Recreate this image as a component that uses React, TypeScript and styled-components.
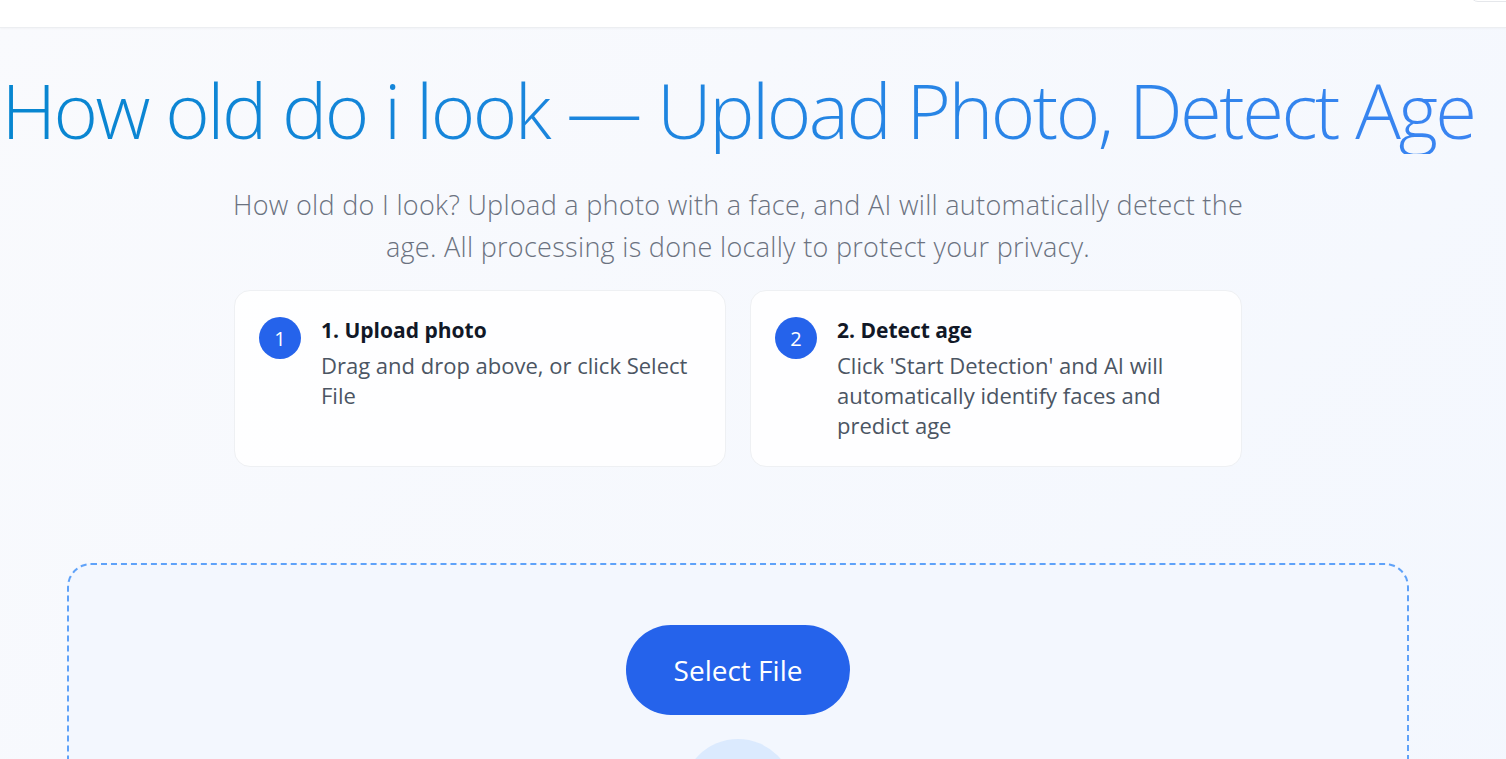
import React from "react";
import styled, { createGlobalStyle } from "styled-components";

const GlobalStyle = createGlobalStyle`
  html, body {
    margin: 0;
    padding: 0;
  }
  body {
    font-family: "Open Sans", "Noto Sans", sans-serif;
    background: #f8fafc;
    -webkit-font-smoothing: antialiased;
  }
`;

const Page = styled.div`
  min-height: 759px;
  background: linear-gradient(135deg, #f9fafd 0%, #f3f7fe 100%);
  overflow: hidden;
`;

const TopBar = styled.header`
  height: 27px;
  background: #fff;
  border-bottom: 1px solid #eceef1;
  box-shadow: 0 1px 2px rgba(15, 23, 42, 0.03);
  display: flex;
  justify-content: flex-end;
  align-items: flex-end;
  overflow: hidden;
`;

const TopButton = styled.div`
  width: 42px;
  height: 36px;
  margin-bottom: 25px;
  margin-right: -8px;
  border: 1px solid #e5e7eb;
  border-radius: 8px;
  background: #fff;
`;

const Main = styled.main`
  width: 1476px;
  display: flex;
  flex-direction: column;
  align-items: center;
`;

const Title = styled.h1`
  margin: 38px -40px 0;
  font-size: 76px;
  font-weight: 300;
  letter-spacing: -2.5px;
  line-height: 88px;
  white-space: nowrap;
  text-align: center;
  background: linear-gradient(to right, #0786d0, #3a84f2);
  -webkit-background-clip: text;
  background-clip: text;
  color: transparent;
`;

const Subtitle = styled.p`
  margin: 30px 0 0;
  width: 1040px;
  font-size: 27px;
  font-weight: 300;
  letter-spacing: 0.3px;
  line-height: 42px;
  color: #6b7280;
  text-align: center;
`;

const Steps = styled.div`
  margin-top: 22px;
  width: 1008px;
  display: grid;
  grid-template-columns: 1fr 1fr;
  gap: 24px;
`;

const StepCard = styled.div`
  display: flex;
  gap: 20px;
  padding: 25px 24px 26px;
  background: rgba(255, 255, 255, 0.85);
  border: 1px solid #eef0f3;
  border-radius: 16px;
  min-height: 122px;
`;

const StepNum = styled.div`
  flex: none;
  width: 42px;
  height: 42px;
  border-radius: 50%;
  background: #2563eb;
  color: #fff;
  display: flex;
  align-items: center;
  justify-content: center;
  font-size: 20px;
  margin-top: 1px;
`;

const StepBody = styled.div`
  display: flex;
  flex-direction: column;
`;

const StepTitle = styled.div`
  font-size: 21px;
  font-weight: 700;
  line-height: 28px;
  color: #111827;
  margin-bottom: 6px;
`;

const StepText = styled.div`
  font-size: 22px;
  line-height: 30px;
  color: #4b5563;
`;

const DropZone = styled.section`
  margin-top: 96px;
  width: 1342px;
  box-sizing: border-box;
  border: 2px dashed #5fa2f9;
  border-radius: 24px;
  background: #f3f7fe;
  display: flex;
  flex-direction: column;
  align-items: center;
  padding-top: 60px;
  height: 400px;
`;

const SelectButton = styled.button`
  height: 90px;
  padding: 0 48px;
  border: none;
  border-radius: 45px;
  background: #2563eb;
  color: #fff;
  font-family: inherit;
  font-size: 28px;
  cursor: pointer;
`;

const IconCircle = styled.div`
  margin-top: 24px;
  width: 112px;
  height: 112px;
  border-radius: 50%;
  background: #dbeafe;
`;

const steps = [
  {
    n: 1,
    title: "1. Upload photo",
    text: "Drag and drop above, or click Select File",
  },
  {
    n: 2,
    title: "2. Detect age",
    text: "Click 'Start Detection' and AI will automatically identify faces and predict age",
  },
];

const App: React.FC = () => {
  return (
    <Page>
      <GlobalStyle />
      <TopBar>
        <TopButton />
      </TopBar>
      <Main>
        <Title>How old do i look — Upload Photo, Detect Age</Title>
        <Subtitle>
          How old do I look? Upload a photo with a face, and AI will automatically detect the
          age. All processing is done locally to protect your privacy.
        </Subtitle>
        <Steps>
          {steps.map((s) => (
            <StepCard key={s.n}>
              <StepNum>{s.n}</StepNum>
              <StepBody>
                <StepTitle>{s.title}</StepTitle>
                <StepText>{s.text}</StepText>
              </StepBody>
            </StepCard>
          ))}
        </Steps>
        <DropZone>
          <SelectButton>Select File</SelectButton>
          <IconCircle />
        </DropZone>
      </Main>
    </Page>
  );
};

export default App;
